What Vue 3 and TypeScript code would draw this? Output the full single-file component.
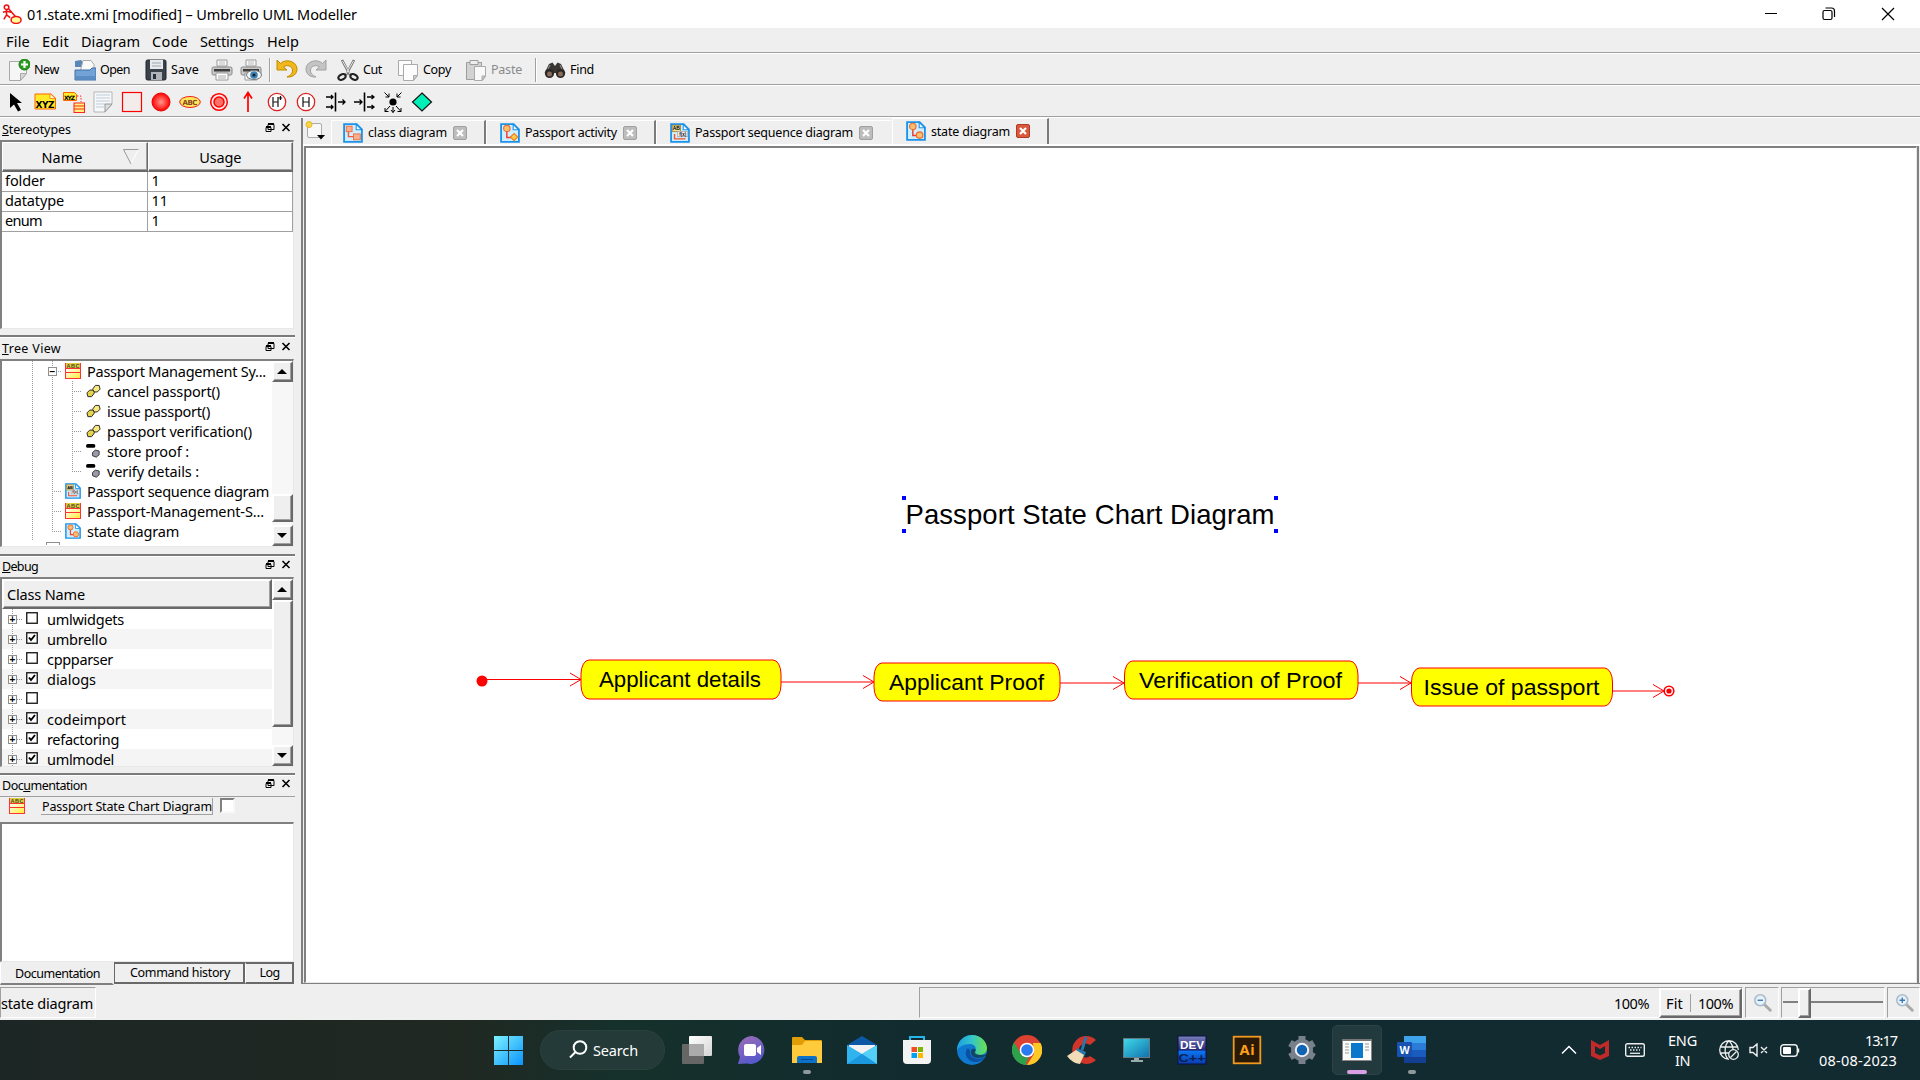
<script setup lang="ts">
import { nextTick } from 'vue'

interface ToolItem { icon?: string; w: number; label?: string; lw?: number; off?: boolean; sep?: boolean }
interface TreeRow { label: string; w: number; icon: string; child?: boolean; box?: boolean; last?: boolean; lastChild?: boolean }

/* Adjusts the tracking of a label so that it occupies the given width. */
const vFit = {
  mounted(el: HTMLElement, binding: { value?: number }) {
    const target = binding.value
    if (!target) return
    nextTick(() => {
      const n = (el.textContent ?? '').trim().length
      el.style.letterSpacing = '0px'
      const now = el.getBoundingClientRect().width
      if (n > 1) el.style.letterSpacing = `${((target - now) / n).toFixed(3)}px`
    })
  },
}

const page = '<path d="M1.200 1.200h13.800l5.800 5.800v13.800h-19.600z" fill="#cfeeff" stroke="#1b93ea" stroke-width="2"/><path d="M14.500 1.500v6h6z" fill="#fff" stroke="#1b93ea" stroke-width="1.200"/>'
const classBox = '<defs><linearGradient id="gCls" x2="1" y2="1"><stop offset="0" stop-color="#fff"/><stop offset="1" stop-color="#ffee30"/></linearGradient></defs><rect x="0" y="0" width="16" height="6" fill="#dccf3a"/><rect x=".5" y="5.500" width="15" height="10" fill="url(#gCls)"/><path d="M.5 0v16M15.500 0v16M0 5.500h16M0 9.500h16M0 15.500h16" stroke="#f33" stroke-width="1"/><text x="8" y="4.800" font-size="5.500" font-weight="700" text-anchor="middle" font-family="Liberation Sans" fill="#543" textLength="13">ABC</text>'
const printer = '<path d="M6 1h10v6H6z" fill="#fafafa" stroke="#999"/><path d="M8 3h6M8 5h6" stroke="#bbb"/><rect x="1" y="8" width="20" height="8" rx="1.500" fill="#c8c8c8" stroke="#888"/><path d="M3 10h16v2.500H3z" fill="#3c3c3c"/><path d="M5 14h12v7H5z" fill="#fff" stroke="#999"/><path d="M7 17h8M7 19h8" stroke="#aaa"/>'
const glass = '<path d="M12 12l7 7" stroke="#a9a9a9" stroke-width="3.200" stroke-linecap="round"/><circle cx="8" cy="8" r="6" fill="#e6f1fa" stroke="#a9bccb" stroke-width="1.700"/>'

const icons: Record<string, string> = {
  app: '<g fill="none" stroke="#e11" stroke-width="1.700"><circle cx="5" cy="3.500" r="2.500"/><path d="M5 6v6M1 9l4-1 5 1M5 12l-3 5M5 12l4 3M7 5l8 9"/></g><ellipse cx="15.500" cy="17.500" rx="5.500" ry="3.800" fill="#ff9" stroke="#e11" stroke-width="1.600"/>',
  new: '<path d="M1.500 2.500h17v12l-6 7h-11z" fill="#f6f6f6" stroke="#a8a8a8"/><path d="M18.500 14.500h-6v7z" fill="#d8d8d8" stroke="#a8a8a8"/><circle cx="16.500" cy="5.500" r="5.500" fill="#2a9d1f" stroke="#137a0c"/><path d="M16.500 2v7M13 5.500h7" stroke="#fff" stroke-width="2.200"/>',
  open: '<path d="M1 2l6-1 2 2v5H1z" fill="#5a86b8"/><path d="M9 1.500h8l3 4v8H6z" fill="#fafafa" stroke="#aaa"/><path d="M1 11h15l2-2h4v12H1z" fill="#73a3d6" stroke="#3e6ea5"/><path d="M1.500 17h20v3.500h-20z" fill="#5b8dc4"/>',
  save: '<rect x="1" y="1" width="20" height="20" rx="1.500" fill="#39414a" stroke="#20252a"/><path d="M5 1h13v9H5z" fill="#e7e9ec"/><path d="M7 4h9M7 7h9" stroke="#9aa"/><path d="M6 13h11v8H6z" fill="#aeb4ba"/><path d="M8 15h3v5H8z" fill="#2b3036"/>',
  print: printer,
  preview: printer + '<ellipse cx="14" cy="16" rx="7.500" ry="4.500" fill="#f2f5f8" stroke="#777"/><circle cx="14" cy="16" r="3.800" fill="#3f82b5"/><circle cx="14" cy="16" r="1.600" fill="#123"/>',
  undo: '<path d="M1 1v10h10L7.500 8c3-2.500 8.500-1.500 9 3 .3 3-1.500 5-5.500 7 6 .5 10-3 10-8C21 2.500 10-1 4.500 4.500z" fill="#f0b81c" stroke="#c08a00"/>',
  redo: '<g transform="translate(22 0) scale(-1 1)"><path d="M1 1v10h10L7.500 8c3-2.500 8.500-1.500 9 3 .3 3-1.500 5-5.500 7 6 .5 10-3 10-8C21 2.500 10-1 4.500 4.500z" fill="#c4c4c4" stroke="#a2a2a2"/></g>',
  cut: '<path d="M5 1l8 15M17 1L9 16" stroke="#777" stroke-width="2.600"/><path d="M5.500 2l7.500 13M16.500 2L9 15" stroke="#e8e8e8"/><ellipse cx="5" cy="18" rx="3.800" ry="2.600" transform="rotate(-25 5 18)" fill="none" stroke="#222" stroke-width="2.200"/><ellipse cx="17" cy="18" rx="3.800" ry="2.600" transform="rotate(25 17 18)" fill="none" stroke="#222" stroke-width="2.200"/>',
  copy: '<path d="M1.500 1.500h13v15h-13z" fill="#fcfcfc" stroke="#aaa"/><path d="M6.500 5.500h14v11l-4 5h-10z" fill="#fcfcfc" stroke="#aaa"/><path d="M20.500 16.500h-4v5z" fill="#ccc" stroke="#aaa"/>',
  paste: '<path d="M1.500 3.500h15v17h-15z" fill="#d2d2d2" stroke="#9d9d9d"/><path d="M5 1.500h8v4H5z" fill="#eee" stroke="#9d9d9d"/><path d="M9.500 7.500h11v10l-3 4h-8z" fill="#f8f8f8" stroke="#aaa"/><path d="M20.500 17h-3.500v4z" fill="#ccc" stroke="#aaa"/>',
  find: '<path d="M5 5l3.500-1.500L11 7l2.500-3.500L17 5l4.500 9H.5z" fill="#3a3634"/><circle cx="5.500" cy="14.500" r="4.600" fill="#2b2725"/><circle cx="16.500" cy="14.500" r="4.600" fill="#2b2725"/><circle cx="5.500" cy="15" r="2.500" fill="#8a6a5a"/><circle cx="16.500" cy="15" r="2.500" fill="#8a6a5a"/><path d="M6 6l-2 4M16 6l2 4" stroke="#999"/>',
  arrow: '<path d="M5 2v15l4-3.500 4 7 3-1.500-4-7h5z" fill="#000"/>',
  xyz: '<path d="M1 3h16l4.500 4v11H1z" fill="#ffe928" stroke="#f60"/><path d="M16 2.500l5.500 5H16z" fill="#fffbd0" stroke="#f60" stroke-width=".7"/><text x="11" y="16.500" font-size="9" font-weight="700" text-anchor="middle" font-family="DejaVu Sans" textLength="19">XYZ</text>',
  xyz2: '<path d="M0.500 1.500h11l2 2v6h-13z" fill="#ffe928" stroke="#f60"/><text x="6.500" y="8.500" font-size="6" font-weight="700" text-anchor="middle" font-family="DejaVu Sans" textLength="11">XYZ</text><path d="M14 5h4v6" fill="none" stroke="#f22" stroke-dasharray="1.500 1.500"/><rect x="11" y="12" width="10.500" height="9.500" fill="#fff27a" stroke="#f22"/><path d="M11 15h10.500M11 18h10.500" stroke="#f22"/>',
  note: '<path d="M2 1h18v12l-7 8H2z" fill="#f6f8fa" stroke="#b5b5b5"/><path d="M4 4h14M4 7h14M4 10h14M4 13h9M4 16h8" stroke="#c0cbd8"/><path d="M20 13h-7v8z" fill="#ddd" stroke="#999"/>',
  rect: '<rect x="1.500" y="1.500" width="19" height="19" fill="#f4eceb" stroke="#f00" stroke-width="1.200"/>',
  ball: '<defs><radialGradient id="gBall"><stop offset="0" stop-color="#ff9a90"/><stop offset="1" stop-color="#f00"/></radialGradient></defs><circle cx="11" cy="11" r="9" fill="url(#gBall)" stroke="#e00"/>',
  abc: '<ellipse cx="11" cy="11" rx="10.300" ry="5.500" fill="#ffe75a" stroke="#e22"/><text x="11" y="13.600" font-size="7" font-weight="700" text-anchor="middle" font-family="DejaVu Sans" fill="#842" textLength="15">ABC</text>',
  end: '<circle cx="11" cy="11" r="8.300" fill="#fbe9e7" stroke="#f00" stroke-width="1.500"/><circle cx="11" cy="11" r="5" fill="#ff7066" stroke="#f00" stroke-width="1.500"/>',
  up: '<path d="M11 21V2M7 7.500L11 1.500l4 6" fill="none" stroke="#f00" stroke-width="1.700"/>',
  hstar: '<circle cx="11" cy="11" r="8.700" fill="#fff" stroke="#d22" stroke-width="1.300"/><path d="M7 6v10M12 6v10M7 11h5M14.500 5v4M12.800 7h3.400" stroke="#111" stroke-width="1.200"/>',
  hist: '<circle cx="11" cy="11" r="8.700" fill="#fff" stroke="#d22" stroke-width="1.300"/><path d="M8 6v10M14 6v10M8 11h6" stroke="#111" stroke-width="1.200"/>',
  join: '<path d="M11.500 1.500v19" stroke="#000" stroke-width="1.600"/><path d="M2 6h7M2 16h7M14 11h7M7 4l2 2-2 2M7 14l2 2-2 2M18.500 8.500L21 11l-2.500 2.500" fill="none" stroke="#000" stroke-width="1.300"/>',
  fork: '<path d="M11.500 1.500v19" stroke="#000" stroke-width="1.600"/><path d="M1 11h8M14 6h7M14 16h7M6.500 8.500L9 11l-2.500 2.500M18.500 4l2.500 2-2.500 2M18.500 14l2.500 2-2.500 2" fill="none" stroke="#000" stroke-width="1.300"/>',
  junction: '<circle cx="11" cy="11" r="3.600" fill="#000"/><path d="M2.500 1.500l4.500 4.500M19.500 1.500L15 6M8 15l-5 5.500M14 15l5 5.500M11 16v5.500M7 2.500v3.500H3.500M15 2.500v3.500h3.500M3 17v3.500h3.500M19 17v3.500h-3.500M9 19l2 2.500 2-2.500" fill="none" stroke="#000"/>',
  choice: '<path d="M11 2l9.500 9-9.500 9-9.500-9z" fill="#00f0b8" stroke="#111" stroke-width="1.200"/>',
  newtab: '<rect x="2.500" y="3.500" width="14" height="14" rx="1.500" fill="#f8f8f8" stroke="#aaa"/><circle cx="4" cy="4.500" r="3" fill="#f7d64a" stroke="#e8b820"/><path d="M12 15h8l-4 4.500z" fill="#000"/>',
  dclass: page + '<path d="M6 8v7h6" fill="none" stroke="#f25c3c" stroke-width="1.600"/><rect x="3.500" y="3.500" width="6.500" height="6" fill="#f9b08c" stroke="#ef6a3c"/><rect x="11.500" y="12" width="7.500" height="6.500" fill="#f9b08c" stroke="#ef6a3c"/>',
  dact: page + '<path d="M7.500 8v8h5" fill="none" stroke="#f23c2c" stroke-width="1.600"/><circle cx="7.500" cy="6" r="3.500" fill="#f7c070" stroke="#ef6a2c" stroke-width="1.200"/><path d="M15.500 11.500l4 4-4 4-4-4z" fill="#ffc94a" stroke="#ef7a1c" stroke-width="1.200"/>',
  dseq: page + '<rect x="2.500" y="2.500" width="9" height="7" fill="#f2dfa0" stroke="#aa8833"/><text x="7" y="8" font-size="5.500" font-weight="700" text-anchor="middle" font-family="Liberation Sans">AB</text><rect x="8.500" y="9.500" width="11" height="5.500" fill="#fff" stroke="#aaa"/><text x="14" y="14" font-size="5" font-weight="700" text-anchor="middle" font-family="Liberation Sans">f(x)</text><path d="M5 12v5.500h12" fill="none" stroke="#f5502c" stroke-width="1.500"/>',
  dstate: page + '<path d="M7.500 8v8h5" fill="none" stroke="#f23c2c" stroke-width="1.600"/><circle cx="7.500" cy="6" r="3.500" fill="#f7c070" stroke="#ef6a2c" stroke-width="1.300"/><circle cx="15" cy="15.500" r="3.600" fill="#f7c070" stroke="#ef6a2c" stroke-width="1.300"/>',
  cls: classBox,
  op: '<g stroke="#222" stroke-width="1"><path d="M1 9.500l3-3h4l1 3-3 4H2z" fill="#e6d34a"/><path d="M7 5.500l3-4h4l1 4-3 3H9z" fill="#f8ea7c"/></g>',
  attr: '<rect x="0" y="0" width="10" height="4" rx="2" fill="#000"/><path d="M7 9l3-2.500 4 1v4L11 14l-4-1.500z" fill="#9a9aa8" stroke="#333"/>',
  zoomout: glass + '<path d="M5 8h6" stroke="#3d78ad" stroke-width="1.500"/>',
  zoomin: glass + '<path d="M5 8h6M8 5v6" stroke="#3d78ad" stroke-width="1.500"/>',
}

const menus = [['File', 24, 36], ['Edit', 27, 39], ['Diagram', 59, 71], ['Code', 36, 48], ['Settings', 54, 67], ['Help', 32, 40]] as [string, number, number][]

const tools: ToolItem[] = [
  { icon: 'new', w: 66, label: 'New', lw: 25 },
  { icon: 'open', w: 71, label: 'Open', lw: 30 },
  { icon: 'save', w: 66, label: 'Save', lw: 28 },
  { icon: 'print', w: 29 },
  { icon: 'preview', w: 29 },
  { w: 7, sep: true },
  { icon: 'undo', w: 29 },
  { icon: 'redo', w: 32 },
  { icon: 'cut', w: 60, label: 'Cut', lw: 19 },
  { icon: 'copy', w: 68, label: 'Copy', lw: 28 },
  { icon: 'paste', w: 70, label: 'Paste', lw: 31, off: true },
  { w: 9, sep: true },
  { icon: 'find', w: 60, label: 'Find', lw: 24 },
]
const shapes = ['arrow', 'xyz', 'xyz2', 'note', 'rect', 'ball', 'abc', 'end', 'up', 'hstar', 'hist', 'join', 'fork', 'junction', 'choice']

const stereotypes = [['folder', 40, '1'], ['datatype', 59, '11'], ['enum', 37, '1']] as [string, number, string][]

const tree: TreeRow[] = [
  { label: 'Passport Management Sy...', w: 179, icon: 'cls', box: true },
  { label: 'cancel passport()', w: 113, icon: 'op', child: true },
  { label: 'issue passport()', w: 103, icon: 'op', child: true },
  { label: 'passport verification()', w: 145, icon: 'op', child: true },
  { label: 'store proof :', w: 82, icon: 'attr', child: true },
  { label: 'verify details :', w: 92, icon: 'attr', child: true, lastChild: true },
  { label: 'Passport sequence diagram', w: 182, icon: 'dseq' },
  { label: 'Passport-Management-S...', w: 177, icon: 'cls' },
  { label: 'state diagram', w: 92, icon: 'dstate', last: true },
]
const debugRows = [
  ['umlwidgets', 77, false], ['umbrello', 60, true], ['cppparser', 66, false], ['dialogs', 49, true],
  ['', 0, false], ['codeimport', 79, true], ['refactoring', 72, true], ['umlmodel', 67, true],
] as [string, number, boolean][]

const tabs = [
  { label: 'class diagram', lw: 79, icon: 'dclass', w: 155, active: false },
  { label: 'Passport activity', lw: 92, icon: 'dact', w: 170, active: false },
  { label: 'Passport sequence diagram', lw: 158, icon: 'dseq', w: 236, active: false },
  { label: 'state diagram', lw: 79, icon: 'dstate', w: 157, active: true },
]

const states = [
  { x: 581, y: 660, w: 200, h: 39, label: 'Applicant details', tx: 599, ty: 686.5, tw: 162 },
  { x: 874, y: 663, w: 186, h: 38, label: 'Applicant Proof', tx: 889, ty: 689.5, tw: 155 },
  { x: 1124.5, y: 661, w: 233.5, h: 38, label: 'Verification of Proof', tx: 1139, ty: 687.5, tw: 203 },
  { x: 1411.5, y: 668, w: 201, h: 38, label: 'Issue of passport', tx: 1423.5, ty: 694.5, tw: 176 },
]
const links = [[487, 581, 679.5], [781, 874, 682], [1060, 1124, 683], [1358, 1411, 683], [1613, 1664, 691]]
const handles = [[902, 496], [1274, 496], [902, 529], [1274, 529]]
</script>

<template>
  <div class="screen">
    <header class="title">
      <svg class="app" viewBox="0 0 22 22" v-html="icons.app"></svg>
      <span class="ui" v-fit="330">01.state.xmi [modified] – Umbrello UML Modeller</span>
      <svg class="winbtns" width="134" height="16" viewBox="0 0 134 16" fill="none" stroke="#000">
        <path d="M1 7.500h12" />
        <rect x="59" y="4.500" width="9" height="9" rx="1.500" stroke-width="1.200" /><path d="M61.500 2h6q3 0 3 3v6" stroke-width="1.200" />
        <path d="M118 2l12 12M130 2l-12 12" stroke-width="1.200" />
      </svg>
    </header>

    <nav class="menu">
      <div v-for="m in menus" :key="m[0]" :style="{ width: m[2] + 'px' }"><span class="ui" v-fit="m[1]">{{ m[0] }}</span></div>
    </nav>

    <div class="bar tools">
      <div v-for="(t, i) in tools" :key="i" class="tool" :class="{ off: t.off }" :style="{ width: t.w + 'px' }">
        <i v-if="t.sep" class="vsep"></i>
        <svg v-if="t.icon" width="22" height="22" viewBox="0 0 22 22" v-html="icons[t.icon]"></svg>
        <span v-if="t.label" class="small" v-fit="t.lw">{{ t.label }}</span>
      </div>
    </div>
    <div class="bar shapes">
      <svg v-for="s in shapes" :key="s" width="22" height="22" viewBox="0 0 22 22" v-html="icons[s]"></svg>
    </div>

    <main class="work">
      <aside class="docks">
        <section class="dock d1">
          <div class="dhead"><span class="small" v-fit="69"><u>S</u>tereotypes</span><svg class="dbtn" viewBox="0 0 26 10"><path d="M3 1.500h6v5H3zM1 4.500h5v4H1z" /><path d="M3 1h6M1 4h5" stroke-width="2" /><path d="M17.500 1l7 7M24.500 1l-7 7" stroke-width="1.600" /></svg></div>
          <div class="sunk grid">
            <div class="thead"><div class="raised"><span class="ui" v-fit="41">Name</span><svg width="18" height="18" viewBox="0 0 18 18" fill="none"><path d="M16.500 1L9 16" stroke="#fff" /><path d="M16.500 1.500h-15L9 16" stroke="#999" /></svg></div><div class="raised"><span class="ui" v-fit="42">Usage</span></div></div>
            <div v-for="r in stereotypes" :key="r[0]" class="trow"><div><span class="ui" v-fit="r[1]">{{ r[0] }}</span></div><div><span class="ui">{{ r[2] }}</span></div></div>
          </div>
        </section>

        <section class="dock d2">
          <div class="dhead"><span class="small" v-fit="59"><u>T</u>ree View</span><svg class="dbtn" viewBox="0 0 26 10"><path d="M3 1.500h6v5H3zM1 4.500h5v4H1z" /><path d="M3 1h6M1 4h5" stroke-width="2" /><path d="M17.500 1l7 7M24.500 1l-7 7" stroke-width="1.600" /></svg></div>
          <div class="sunk split">
            <div class="tree">
              <div v-for="r in tree" :key="r.label" class="node" :class="{ child: r.child }">
                <i class="rail"></i>
                <i class="rail" :class="{ half: r.last }"></i>
                <i v-if="r.child" class="rail" :class="{ half: r.lastChild }"></i>
                <i class="branch"></i>
                <b v-if="r.box" class="pm">−</b>
                <svg width="16" height="16" :viewBox="r.icon[0] === 'd' ? '0 0 22 22' : '0 0 16 16'" v-html="icons[r.icon]"></svg>
                <span class="ui" v-fit="r.w">{{ r.label }}</span>
              </div>
              <div class="peek"></div>
            </div>
            <div class="scroll"><i class="raised up"></i><i class="grow"></i><i class="raised thumb1"></i><i class="gap3"></i><i class="raised down"></i></div>
          </div>
        </section>

        <section class="dock d3">
          <div class="dhead"><span class="small" v-fit="36"><u>D</u>ebug</span><svg class="dbtn" viewBox="0 0 26 10"><path d="M3 1.500h6v5H3zM1 4.500h5v4H1z" /><path d="M3 1h6M1 4h5" stroke-width="2" /><path d="M17.500 1l7 7M24.500 1l-7 7" stroke-width="1.600" /></svg></div>
          <div class="sunk split">
            <div class="dbg">
              <div class="raised chead"><span class="ui" v-fit="78">Class Name</span></div>
              <div v-for="(r, i) in debugRows" :key="i" class="drow">
                <i class="rail"></i><b class="pm">+</b><i class="branch"></i>
                <svg class="chk" width="12" height="12" viewBox="0 0 12 12"><rect x=".75" y=".75" width="10.500" height="10.500" fill="#fff" stroke="#111" stroke-width="1.300" /><path v-if="r[2]" d="M3 5.500l2 2.500 4-5" fill="none" stroke="#000" stroke-width="1.900" /></svg>
                <span class="ui" v-fit="r[1]">{{ r[0] }}</span>
              </div>
            </div>
            <div class="scroll"><i class="raised up"></i><i class="raised thumb2"></i><i class="grow"></i><i class="raised down"></i></div>
          </div>
        </section>

        <section class="dock d4">
          <div class="dhead"><span class="small" v-fit="85">Doc<u>u</u>mentation</span><svg class="dbtn" viewBox="0 0 26 10"><path d="M3 1.500h6v5H3zM1 4.500h5v4H1z" /><path d="M3 1h6M1 4h5" stroke-width="2" /><path d="M17.500 1l7 7M24.500 1l-7 7" stroke-width="1.600" /></svg></div>
          <div class="docline"><svg width="16" height="16" viewBox="0 0 16 16" v-html="icons.cls"></svg><div class="docname"><span class="small" v-fit="170">Passport State Chart Diagram</span></div><i class="box"></i></div>
          <div class="sunk area"></div>
          <div class="btabs"><div class="on"><span class="small" v-fit="85">Documentation</span></div><div class="t2"><span class="small" v-fit="100">Command history</span></div><div class="t3"><span class="small" v-fit="20">Log</span></div></div>
        </section>
      </aside>

      <section class="center">
        <div class="tabs">
          <svg class="newtab" width="22" height="22" viewBox="0 0 22 22" v-html="icons.newtab"></svg>
          <div v-for="t in tabs" :key="t.label" class="tab" :class="{ active: t.active }" :style="{ width: t.w + 'px' }">
            <svg width="20" height="20" viewBox="0 0 22 22" v-html="icons[t.icon]"></svg>
            <span class="small" v-fit="t.lw">{{ t.label }}</span>
            <svg class="close" width="14" height="14" viewBox="0 0 14 14"><rect x=".5" y=".5" width="13" height="13" rx="1.500" :fill="t.active ? '#d9583e' : '#bdbdbd'" :stroke="t.active ? '#b23a24' : '#a0a0a0'" /><path d="M4 4l6 6M10 4l-6 6" stroke="#fff" stroke-width="2.200" /></svg>
          </div>
        </div>
        <div class="canvas">
          <svg width="1611" height="834" viewBox="306 148 1611 834">
            <rect v-for="(h, i) in handles" :key="i" :x="h[0]" :y="h[1]" width="4" height="4" fill="#00f" />
            <text x="905.5" y="524" font-size="27.500" textLength="369" class="arial">Passport State Chart Diagram</text>
            <circle cx="482" cy="681" r="5.500" fill="#f00" />
            <g v-for="(l, i) in links" :key="'l' + i" fill="none" stroke="#f00">
              <path :d="`M${l[0]} ${l[2]}H${l[1]}M${l[1] - 11} ${l[2] - 6.5}L${l[1]} ${l[2]}L${l[1] - 11} ${l[2] + 6.5}`" />
            </g>
            <g v-for="s in states" :key="s.label">
              <rect :x="s.x" :y="s.y" :width="s.w" :height="s.h" rx="8" ry="14" fill="#ff0" stroke="#f00" />
              <text :x="s.tx" :y="s.ty" font-size="22.500" :textLength="s.tw" lengthAdjust="spacingAndGlyphs" class="arial">{{ s.label }}</text>
            </g>
            <circle cx="1669" cy="691" r="4.800" fill="#fff" stroke="#f00" stroke-width="1.600" /><circle cx="1669" cy="691" r="2.600" fill="#f00" />
          </svg>
        </div>
      </section>
    </main>

    <footer class="status">
      <div class="cell s1"><span class="ui" v-fit="92">state diagram</span></div>
      <div class="cell s2"><span class="ui" v-fit="35">100%</span><div class="raised fit"><span class="ui" v-fit="17">Fit</span><i></i><span class="ui" v-fit="35">100%</span></div></div>
      <div class="cell s3"><svg width="20" height="20" viewBox="0 0 22 22" v-html="icons.zoomout"></svg></div>
      <div class="cell s4"><i class="groove"></i><i class="raised knob"></i><i class="groove long"></i></div>
      <div class="cell s5"><svg width="20" height="20" viewBox="0 0 22 22" v-html="icons.zoomin"></svg></div>
    </footer>

    <footer class="taskbar">
      <svg class="start" width="29" height="29" viewBox="0 0 29 29"><defs><linearGradient id="gWin" x2="1" y2="1"><stop offset="0" stop-color="#7df1ff" /><stop offset="1" stop-color="#0a94fb" /></linearGradient></defs><path d="M0 0h14v14H0zM15 0h14v14H15zM0 15h14v14H0zM15 15h14v14H15z" fill="url(#gWin)" /></svg>
      <div class="search"><svg width="19" height="19" viewBox="0 0 19 19" fill="none" stroke="#fff" stroke-width="2"><circle cx="11" cy="7.500" r="6.300" /><path d="M6.500 12L1 17.500" /></svg><span class="ui" v-fit="45">Search</span></div>
      <div class="apps">
        <div><svg viewBox="0 0 30 30"><defs><linearGradient id="gT" x2="1" y2="1"><stop offset="0" stop-color="#fff" /><stop offset="1" stop-color="#d5d5d5" /></linearGradient></defs><rect y="9" width="22" height="20" rx="1" fill="#666" /><rect x="7" y="1" width="23" height="20" rx="1" fill="url(#gT)" /><rect x="7" y="9" width="15" height="12" fill="#aaa" /></svg></div>
        <div><svg viewBox="0 0 30 30"><defs><linearGradient id="gC" x1=".2" x2=".6" y2="1"><stop offset="0" stop-color="#9a6cb8" /><stop offset="1" stop-color="#5358cc" /></linearGradient></defs><path d="M15 1a14 14 0 1 1-5 27.500L1 29l2-7A14 14 0 0 1 15 1z" fill="url(#gC)" /><rect x="7" y="9" width="12" height="12" rx="2" fill="#fff" /><path d="M20 13l4-3v10l-4-3z" fill="#fff" /></svg></div>
        <div><svg viewBox="0 0 30 30"><path d="M0 3q0-1 1-1h9l3 3h16q1 0 1 1v6H0z" fill="#e09d05" /><path d="M0 10h10l3-4h16q1 0 1 1v21H0z" fill="#ffcb3d" /><path d="M5 28v-5q0-2 2-2h16q2 0 2 2v5z" fill="#0c72c8" /><path d="M9 24.500h12" stroke="#054a8e" /></svg><i class="dot"></i></div>
        <div><svg viewBox="0 0 30 30"><path d="M0 10L15 1l15 9v8H0z" fill="#0b59a5" /><path d="M2 10h26v6L15 22 2 16z" fill="#f2f2f2" /><path d="M0 10l15 9 15-9v19H0z" fill="#2fb4ef" /><path d="M30 10v19L9 15l6 4z" fill="#54d0f8" /><path d="M0 29l15-10 15 10z" fill="#1c98de" /></svg></div>
        <div><svg viewBox="0 0 30 30"><path d="M8 7V2h14v5" fill="none" stroke="#26b5ea" stroke-width="2" /><path d="M1 5h28v20q0 4-4 4H5q-4 0-4-4z" fill="#f3f3f3" /><path d="M9.500 12h5.500v5H9.500z" fill="#f04e23" /><path d="M16 12h5v5h-5z" fill="#7cb600" /><path d="M9.500 18h5.500v5H9.500z" fill="#00a1f1" /><path d="M16 18h5v5h-5z" fill="#fdb800" /></svg></div>
        <div><svg viewBox="0 0 30 30"><defs><linearGradient id="gE" x2="1"><stop offset="0" stop-color="#1b9de2" /><stop offset=".5" stop-color="#35c6c8" /><stop offset="1" stop-color="#6be04c" /></linearGradient></defs><circle cx="15" cy="15" r="15" fill="#0f78cf" /><path d="M0 14C1 5 8 0 15 0c9 0 15 7 15 13 0 5-4 7-8 7-4 0-5-1-4-3 2-4 0-8-5-8C7 9 2 12 0 15z" fill="url(#gE)" /><path d="M10 14c-4 6 2 14 10 13 4-.5 7-3 8-5-8 4-16 1-15-6 .2-2-2-3-3-2z" fill="#0b50a4" /><path d="M15 14c-3 4 0 9 6 9 3 0 6-1 7-2l2 1V19c-4 2-12 1-12-2 2-3 0-4-3-3z" fill="#122b2f" opacity=".65" /></svg></div>
        <div><svg viewBox="0 0 30 30"><circle cx="15" cy="15" r="15" fill="#dd4132" /><path d="M2 7.500L9 19l6 11A15 15 0 0 1 2 7.500z" fill="#2da24c" /><path d="M15 30l7-11-1-11h7.500A15 15 0 0 1 15 30z" fill="#fdc924" /><path d="M8.500 18.500A7.500 7.500 0 0 0 17 22l-4 7.800A15 15 0 0 1 2 8z" fill="#2da24c" /><circle cx="15" cy="15" r="7.300" fill="#fff" /><circle cx="15" cy="15" r="5.800" fill="#2a7bf0" /></svg></div>
        <div><svg viewBox="0 0 30 30"><path d="M29 5l-6 5a7 7 0 1 0 0 11l6 4A14 14 0 1 1 29 5z" fill="#cf3529" /><path d="M19 2l-4 13" stroke="#2877ad" stroke-width="2.800" /><path d="M10 13l9 4-2 5-9-4z" fill="#2877ad" /><path d="M9 15l8 5-4 9q-8-1-13-8z" fill="#f2dcb8" /></svg></div>
        <div><svg viewBox="0 0 30 30"><defs><linearGradient id="gM" x2="1" y2="1"><stop offset="0" stop-color="#41dbe8" /><stop offset="1" stop-color="#0f6fae" /></linearGradient></defs><rect x="1.500" y="3.500" width="26" height="19" fill="url(#gM)" stroke="#637b84" /><path d="M12 23h5v2h4v2H9v-2h3z" fill="#9aa" /></svg></div>
        <div><svg viewBox="0 0 30 30"><defs><linearGradient id="gD" y2="1" x2="0"><stop offset="0" stop-color="#7b7fbc" /><stop offset=".5" stop-color="#25297a" /><stop offset=".55" stop-color="#0b74f0" /><stop offset="1" stop-color="#0a3cae" /></linearGradient></defs><rect x="1" y="1" width="28" height="28" fill="url(#gD)" stroke="#0b1040" /><text x="15" y="13.500" font-size="11.500" font-weight="700" text-anchor="middle" fill="#fff" font-family="Liberation Sans" textLength="24" lengthAdjust="spacingAndGlyphs">DEV</text><text x="15" y="27" font-size="11.500" font-weight="700" text-anchor="middle" fill="#0a2054" font-family="Liberation Sans" textLength="27" lengthAdjust="spacingAndGlyphs">C++</text></svg></div>
        <div><svg viewBox="0 0 30 30"><rect x="1.700" y="1.700" width="26.600" height="26.600" fill="#2a1a05" stroke="#f29a1d" stroke-width="1.800" /><text x="15" y="20" font-size="14.500" font-weight="700" text-anchor="middle" fill="#ff9f1c" font-family="Noto Sans" textLength="15">Ai</text></svg></div>
        <div><svg viewBox="0 0 30 30"><circle cx="15" cy="15" r="11" fill="#78818b" /><path d="M15 1v28M3 8l24 14M27 8L3 22" stroke="#78818b" stroke-width="7" /><circle cx="15" cy="15" r="6.200" fill="#0f63b5" stroke="#f0f0f0" stroke-width="2" /></svg></div>
        <div class="act"><svg viewBox="0 0 30 30"><rect x=".5" y="4.500" width="29" height="21" fill="#fbfbfb" stroke="#888" /><path d="M0 4h30v2H0z" fill="#777" /><rect x="9" y="8" width="12" height="15" fill="#0b78cc" /><path d="M3 9h4M3 12h4M3 15h4M3 18h4M23 9h4M23 12h4M23 15h4" stroke="#999" /></svg><i class="dot wide"></i></div>
        <div><svg viewBox="0 0 30 30"><path d="M7 1h22v8H7z" fill="#3ea3ea" /><path d="M7 8h22v7H7z" fill="#2a7cd6" /><path d="M7 15h22v7H7z" fill="#1a5bbf" /><path d="M7 22h22v6H7z" fill="#123f94" /><rect y="7" width="15" height="15" rx="1" fill="#1852b2" /><text x="7.500" y="18.500" font-size="10.500" font-weight="700" text-anchor="middle" fill="#fff" font-family="Noto Sans">W</text></svg><i class="dot"></i></div>
      </div>
      <div class="tray">
        <svg class="chev" width="16" height="10" viewBox="0 0 16 10" fill="none" stroke="#fff" stroke-width="1.500"><path d="M1 8.500l7-7 7 7" /></svg>
        <svg class="mc" width="18" height="20" viewBox="0 0 18 20"><path d="M0 0l9 5 9-5v16l-9 4-9-4z" fill="#c22a2a" /><path d="M4 6l5 3 5-3v7l-5 2.500L4 13z" fill="#122b2f" /></svg>
        <svg class="kb" width="20" height="14" viewBox="0 0 20 14" fill="none" stroke="#eee"><rect x=".7" y=".7" width="18.600" height="12.600" rx="1.800" stroke-width="1.400" /><path d="M3.500 4.500h13M5 7h10" stroke-dasharray="1.500 1.500" stroke-width="1.400" /><path d="M5 10.300h10" stroke-width="1.300" /></svg>
        <div class="lang"><span class="ui" v-fit="29">ENG</span><span class="ui" v-fit="15">IN</span></div>
        <svg class="net" width="20" height="20" viewBox="0 0 20 20" fill="none" stroke="#eee" stroke-width="1.300"><path d="M10 19.300A9.300 9.300 0 1 1 19.300 10M1 7h18M1 13h9M10 .7C5 5 5 15 9 19M10 .7c2.500 2.500 4 5 4 9" /><circle cx="14.500" cy="14.500" r="4.800" fill="#122b2f" /><path d="M11.500 17.500l6-6" /></svg>
        <svg class="spk" width="20" height="14" viewBox="0 0 20 14" fill="none" stroke="#eee" stroke-width="1.400"><path d="M1 4.500h3L8 1v12L4 9.500H1zM12 4l6 6M18 4l-6 6" /></svg>
        <svg class="bat" width="20" height="13" viewBox="0 0 20 13"><rect x=".7" y=".7" width="16.600" height="11.600" rx="3" fill="none" stroke="#eee" stroke-width="1.400" /><rect x="3" y="3" width="8" height="7" rx="1" fill="#fff" /><path d="M18 4.500h1.200v4H18z" fill="#eee" /></svg>
        <div class="clock"><span class="ui" v-fit="32">13:17</span><span class="ui" v-fit="78">08-08-2023</span></div>
      </div>
    </footer>
  </div>
</template>

<style>
body { margin: 0; overflow: hidden; }
</style>

<style scoped>
.screen { width: 1920px; height: 1080px; display: flex; flex-direction: column; background: #efefef; color: #000; overflow: hidden; }
.screen * { box-sizing: border-box; }
svg { flex: none; display: block; }
.ui { font: 14.5px/20px "Noto Sans", sans-serif; white-space: pre; }
.small { font: 12.5px/18px "Noto Sans", sans-serif; white-space: pre; }
.arial { font-family: "Liberation Sans", Arial, sans-serif; fill: #000; }
.title { height: 29px; background: #fff; display: flex; align-items: center; padding: 0 22px 0 1px; }
.app { width: 22px; height: 20px; margin-right: 4px; }
.winbtns { margin-left: auto; }
.menu { height: 26px; display: flex; align-items: center; padding: 0 6px; border-bottom: 1px solid #fff; box-shadow: inset 0 -1px #a0a0a0; }
.bar { height: 32px; display: flex; align-items: center; border-bottom: 1px solid #fff; box-shadow: inset 0 -1px #a0a0a0; flex: none; }
.tools { padding-left: 8px; }
.tool { display: flex; align-items: center; gap: 4px; flex: none; }
.tool .small { padding-top: 1px; }
.off { color: #8a8a8a; }
.vsep { width: 2px; height: 24px; background: #a0a0a0; border-right: 1px solid #fff; }
.shapes { padding-left: 5px; gap: 7px; }
.work { height: 866px; display: flex; flex: none; }
.docks { width: 295px; display: flex; flex-direction: column; }
.dock { display: flex; flex-direction: column; flex: none; }
.d1 { height: 217px; }
.d2, .d3, .d4 { border-top: 2px solid #7b7b7b; box-shadow: inset 0 1px #fff; }
.d2 { height: 219px; }
.d3 { height: 219px; }
.d4 { height: 211px; }
.dhead { height: 22px; display: flex; justify-content: space-between; align-items: center; padding: 2px 4px 0 2px; flex: none; }
.d3 .dhead { height: 21px; padding-top: 0; }
.d3 .dbtn { margin-bottom: 3px; }
.dbtn { width: 26px; height: 10px; fill: none; stroke: #000; margin-bottom: 5px; }
.sunk { background: #fff; border-style: solid; border-width: 2px 1px 1px 2px; border-color: #808080 #e8e8e8 #e8e8e8 #808080; margin-right: 1px; }
.raised { background: #efefef; display: block; border: 2px solid; border-color: #fff #696969 #696969 #fff; box-shadow: inset -1px -1px #a0a0a0; }
.grid { height: 189px; }
.thead { display: flex; height: 30px; }
.thead .raised { width: 146px; display: flex; align-items: center; justify-content: center; border-width: 1px 1px 2px 1px; }
.thead .raised:first-child { justify-content: flex-end; padding-right: 7px; gap: 39px; }
.trow { height: 20px; display: flex; width: 291px; }
.trow div { width: 50%; border-right: 1px solid #a0a0a0; border-bottom: 1px solid #a0a0a0; padding-left: 3px; height: 20px; line-height: 16px; }
.trow .ui { line-height: 16px; }
.trow div + div { padding-left: 4px; }
.split { display: flex; height: 188px; overflow: hidden; }
.d3 .split { height: 190px; }
.tree, .dbg { flex: 1; overflow: hidden; }
.node { height: 20px; display: flex; align-items: center; padding-left: 30px; }
.rail { width: 1px; height: 20px; margin-right: 19px; background: repeating-linear-gradient(#999 0 1px, #fff 1px 2px); flex: none; }
.rail.half { height: 10px; align-self: flex-start; }
.branch { width: 10px; height: 1px; margin-left: -20px; background: repeating-linear-gradient(90deg, #999 0 1px, transparent 1px 2px); flex: none; }
.node svg { margin: 0 6px 0 3px; }
.child svg { width: 15px; height: 15px; margin: 0 6px 0 4px; }
.pm { width: 9px; height: 9px; border: 1px solid #909090; background: #fff; font: 700 10px/7px "Liberation Sans", sans-serif; text-align: center; flex: none; }
.node .pm { margin: 0 4px 0 -14px; }
.node .pm + svg { margin-left: 4px; }
.peek { width: 14px; height: 3px; margin: 1px 0 0 44px; border: 1px solid #909090; border-width: 1px 1px 0 1px; }
.scroll { width: 21px; display: flex; flex-direction: column; background: #f7f7f7; flex: none; }
.scroll i { flex: none; }
.scroll .grow { flex: 1; }
.up, .down { height: 21px; display: flex; align-items: center; justify-content: center; padding-right: 1px; }
.up::before, .down::before { content: ""; border: 5px solid transparent; border-top-width: 0; border-bottom: 5px solid #000; }
.down::before { border-bottom-width: 0; border-top: 5px solid #000; border-bottom-color: transparent; }
.thumb1 { height: 28px; }
.gap3 { height: 3px; }
.thumb2 { height: 127px; }
.chead { height: 30px; display: flex; align-items: center; padding-left: 3px; }
.drow { height: 20px; display: flex; align-items: center; padding-left: 10px; }
.drow:nth-child(odd) { background: #f5f5f5; }
.drow .rail { margin-right: 0; }
.drow .pm { margin: 0 0 0 -5px; }
.drow .branch { margin: 0; width: 6px; }
.chk { margin: -3px 9px 0 3px; }
.d4 .dhead { height: 22px; border-bottom: 1px solid #a0a0a0; padding-top: 0; }
.d4 .dbtn { margin-bottom: 4px; }
.docline { height: 25px; display: flex; padding: 1px 0 0 9px; }
.docname { margin-left: 16px; height: 17px; width: 172px; border-right: 1px solid #a0a0a0; border-bottom: 1px solid #a0a0a0; padding-left: 1px; line-height: 15px; }
.docname .small { line-height: 15px; }
.box { width: 15px; height: 15px; margin-left: 7px; background: #fff; border: 2px solid; border-color: #808080 #f8f8f8 #f8f8f8 #808080; }
.area { height: 141px; }
.btabs { display: flex; align-items: flex-start; height: 22px; }
.btabs div { display: flex; align-items: center; justify-content: center; height: 22px; border: 1px solid #696969; border-width: 2px 2px 2px 1px; }
.btabs .on { width: 114px; height: 23px; border-color: #efefef #efefef #808080 #fff; padding-left: 2px; }
.btabs .t2 { width: 131px; padding-left: 2px; }
.btabs .t3 { width: 49px; border-left-color: #fff; padding-left: 1px; }
.center { width: 1619px; margin-left: 6px; border-left: 2px solid #808080; display: flex; flex-direction: column; border-bottom: 1px solid #808080; }
.tabs { height: 28px; display: flex; align-items: flex-end; border-bottom: 2px solid #fff; flex: none; padding-left: 3px; }
.newtab { width: 22px; margin: 0 4px 2px -1px; }
.tab { height: 24px; display: flex; align-items: center; border-top: 1px solid #fff; border-left: 1px solid #fff; border-right: 2px solid #7b7b7b; padding-left: 11px; flex: none; border-radius: 2px 0 0; }
.tab:nth-of-type(2) { padding-left: 13px; }
.tab:nth-of-type(3) { padding-left: 13px; border-right-color: transparent; }
.tab.active { height: 26px; padding-left: 13px; padding-bottom: 1px; }
.tab .small { margin: 0 6px 0 5px; padding-top: 1px; }
.canvas { height: 837px; margin: 0 3px 0 1px; border-style: solid; border-width: 2px 1px 1px 2px; border-color: #808080 #e8e8e8 #e8e8e8 #808080; background: #fff; overflow: hidden; box-shadow: 2px 0 #808080; }
.status { height: 36px; display: flex; padding: 3px 0 2px; flex: none; }
.cell { border: 1px solid; border-color: #a0a0a0 #fff #fff #a0a0a0; display: flex; align-items: center; }
.s1 { width: 96px; padding-left: 0; }
.s2 { width: 824px; margin-left: 823px; justify-content: flex-end; }
.fit { width: 83px; height: 30px; margin-left: 10px; display: flex; align-items: center; padding-left: 5px; }
.fit i { width: 1px; height: 18px; background: #a0a0a0; margin: 0 7px 0 7px; }
.s3 { width: 34px; margin-left: 2px; padding-left: 7px; }
.s4 { width: 104px; margin-left: 2px; padding-left: 1px; }
.groove { width: 15px; height: 2px; background: #808080; margin-bottom: 2px; }
.groove.long { width: 72px; }
.knob { width: 13px; height: 30px; }
.s5 { flex: 1; margin-left: 2px; padding-left: 7px; }
.taskbar { height: 60px; display: flex; align-items: center; flex: none; color: #fff; background: linear-gradient(90deg, #1c2624 0, #202822 24%, #16302b 32%, #112b2f 48%, #122b31 100%); }
.start { margin-left: 494px; margin-top: 1px; }
.search { width: 125px; height: 40px; margin-left: 17px; border-radius: 20px; background: #243a38; border: 1px solid #2b413e; display: flex; align-items: center; padding-left: 28px; gap: 5px; }
.search svg { margin-bottom: 2px; }
.apps { display: flex; margin-left: 4px; }
.apps > div { width: 55px; height: 50px; display: flex; flex-direction: column; align-items: center; padding-top: 10px; }
.apps svg { width: 30px; height: 30px; }
.dot { width: 8px; height: 4px; border-radius: 2px; background: #8d9a9c; margin-top: 5px; }
.dot.wide { width: 20px; background: #d9a0e4; }
.apps > .act { width: 50px; margin: 0 2.5px; background: #22393e; border: 1px solid #2c4348; border-radius: 5px; padding-top: 9px; }
.tray { display: flex; align-items: center; flex: 1; padding-left: 122px; }
.mc { margin-left: 14px; }
.kb { margin-left: 16px; }
.lang { width: 29px; margin-left: 23px; display: flex; flex-direction: column; align-items: center; }
.net { margin-left: 22px; }
.spk { margin-left: 10px; }
.bat { margin-left: 11px; }
.clock { margin-left: auto; margin-right: 23px; display: flex; flex-direction: column; align-items: flex-end; }
</style>
